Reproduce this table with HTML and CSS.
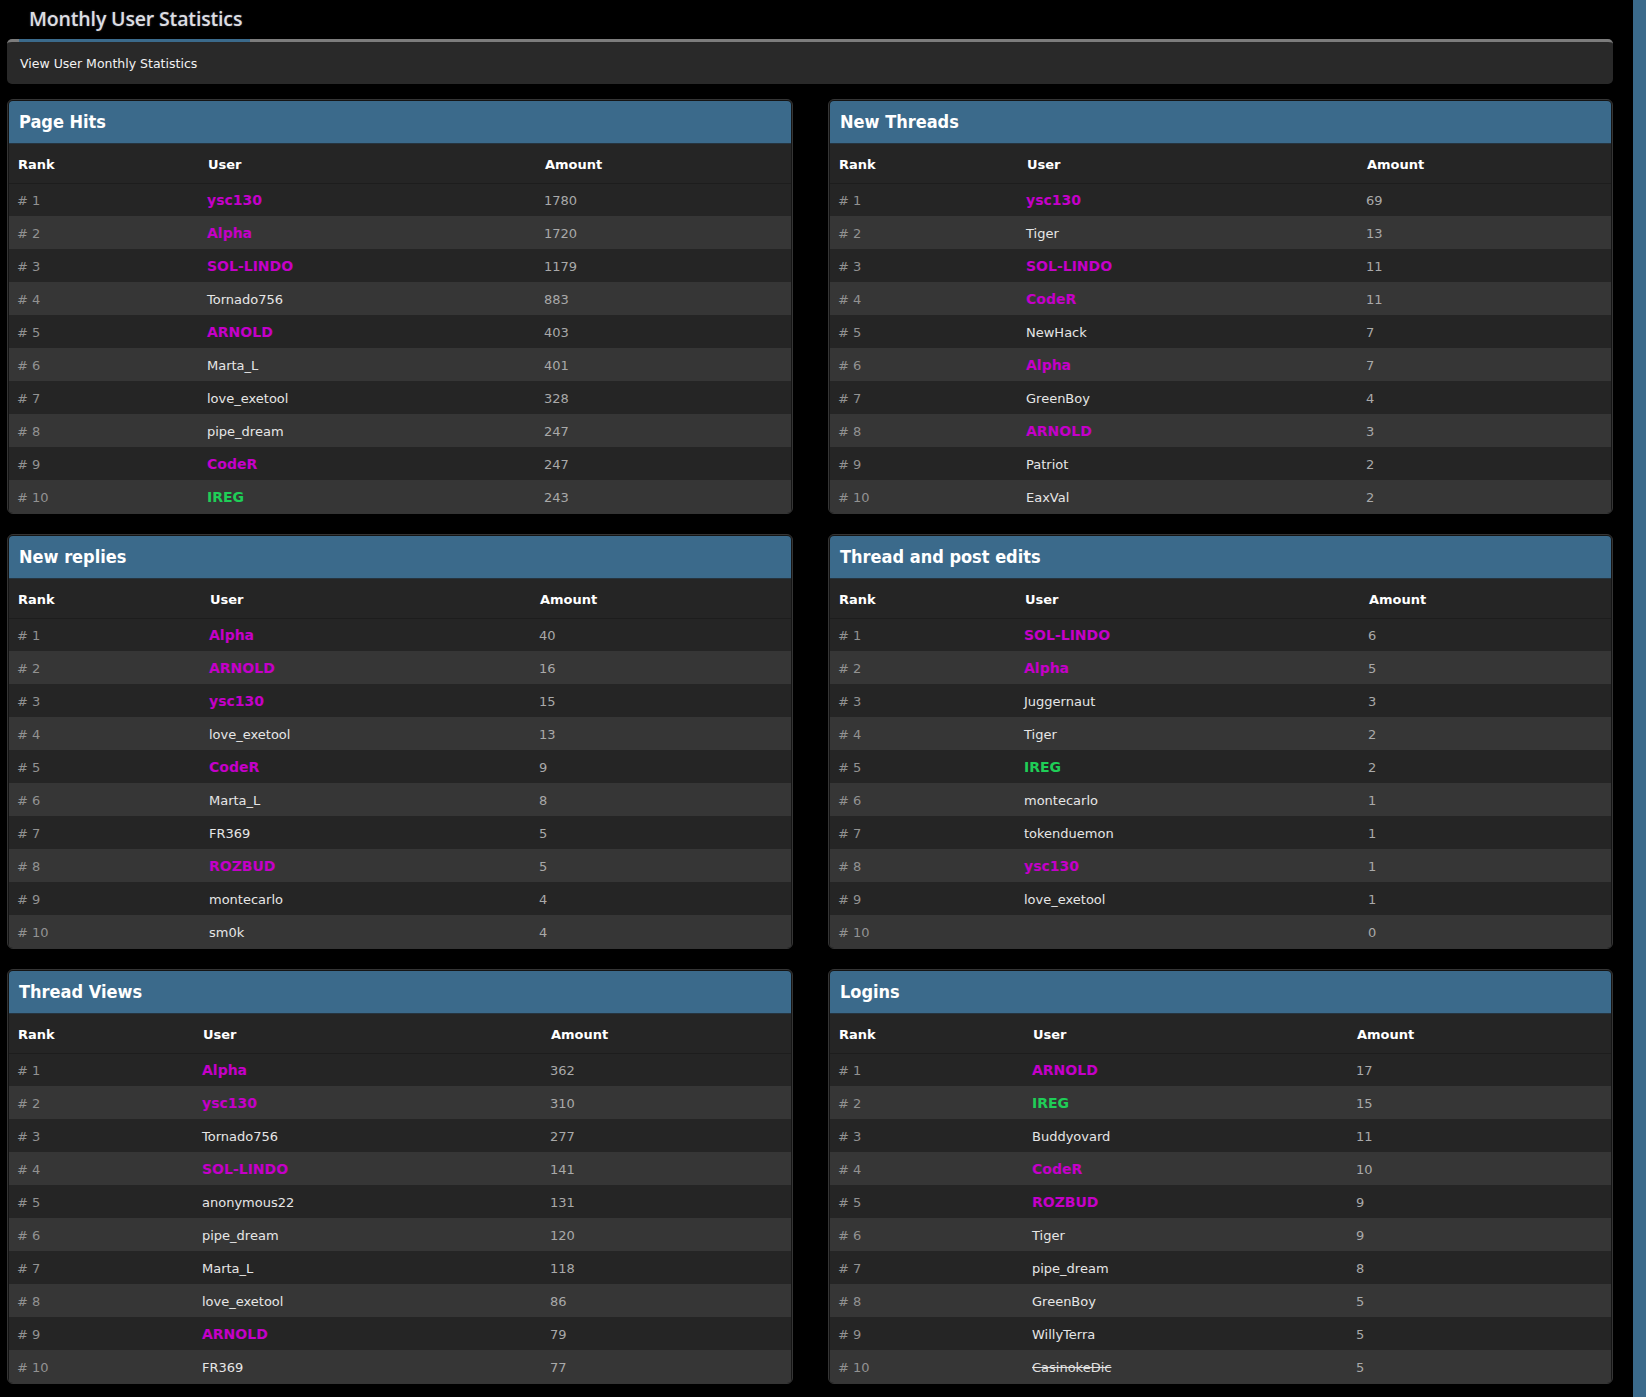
FILE: index.html
```html
<!DOCTYPE html>
<html lang="en">
<head>
<meta charset="utf-8">
<title>Monthly User Statistics</title>
<link rel="stylesheet" href="styles.css">
</head>
<body>
<div class="page">
  <main class="main">
    <h1 class="page-title">Monthly User Statistics</h1>
    <nav class="subnav"><span class="subnav-item">View User Monthly Statistics</span></nav>

    <div class="grid">
      <section class="panel">
        <h2 class="panel-head">Page Hits</h2>
        <table class="stats stats--hits">
          <colgroup><col class="c-rank"><col class="c-user"><col></colgroup>
          <thead><tr><th>Rank</th><th>User</th><th>Amount</th></tr></thead>
          <tbody>
            <tr><td class="rank"># 1</td><td><span class="u-mag">ysc130</span></td><td class="amt">1780</td></tr>
            <tr><td class="rank"># 2</td><td><span class="u-mag">Alpha</span></td><td class="amt">1720</td></tr>
            <tr><td class="rank"># 3</td><td><span class="u-mag">SOL-LINDO</span></td><td class="amt">1179</td></tr>
            <tr><td class="rank"># 4</td><td class="u">Tornado756</td><td class="amt">883</td></tr>
            <tr><td class="rank"># 5</td><td><span class="u-mag">ARNOLD</span></td><td class="amt">403</td></tr>
            <tr><td class="rank"># 6</td><td class="u">Marta_L</td><td class="amt">401</td></tr>
            <tr><td class="rank"># 7</td><td class="u">love_exetool</td><td class="amt">328</td></tr>
            <tr><td class="rank"># 8</td><td class="u">pipe_dream</td><td class="amt">247</td></tr>
            <tr><td class="rank"># 9</td><td><span class="u-mag">CodeR</span></td><td class="amt">247</td></tr>
            <tr><td class="rank"># 10</td><td><span class="u-grn">IREG</span></td><td class="amt">243</td></tr>
          </tbody>
        </table>
      </section>

      <section class="panel">
        <h2 class="panel-head">New Threads</h2>
        <table class="stats stats--threads">
          <colgroup><col class="c-rank"><col class="c-user"><col></colgroup>
          <thead><tr><th>Rank</th><th>User</th><th>Amount</th></tr></thead>
          <tbody>
            <tr><td class="rank"># 1</td><td><span class="u-mag">ysc130</span></td><td class="amt">69</td></tr>
            <tr><td class="rank"># 2</td><td class="u">Tiger</td><td class="amt">13</td></tr>
            <tr><td class="rank"># 3</td><td><span class="u-mag">SOL-LINDO</span></td><td class="amt">11</td></tr>
            <tr><td class="rank"># 4</td><td><span class="u-mag">CodeR</span></td><td class="amt">11</td></tr>
            <tr><td class="rank"># 5</td><td class="u">NewHack</td><td class="amt">7</td></tr>
            <tr><td class="rank"># 6</td><td><span class="u-mag">Alpha</span></td><td class="amt">7</td></tr>
            <tr><td class="rank"># 7</td><td class="u">GreenBoy</td><td class="amt">4</td></tr>
            <tr><td class="rank"># 8</td><td><span class="u-mag">ARNOLD</span></td><td class="amt">3</td></tr>
            <tr><td class="rank"># 9</td><td class="u">Patriot</td><td class="amt">2</td></tr>
            <tr><td class="rank"># 10</td><td class="u">EaxVal</td><td class="amt">2</td></tr>
          </tbody>
        </table>
      </section>

      <section class="panel">
        <h2 class="panel-head">New replies</h2>
        <table class="stats stats--replies">
          <colgroup><col class="c-rank"><col class="c-user"><col></colgroup>
          <thead><tr><th>Rank</th><th>User</th><th>Amount</th></tr></thead>
          <tbody>
            <tr><td class="rank"># 1</td><td><span class="u-mag">Alpha</span></td><td class="amt">40</td></tr>
            <tr><td class="rank"># 2</td><td><span class="u-mag">ARNOLD</span></td><td class="amt">16</td></tr>
            <tr><td class="rank"># 3</td><td><span class="u-mag">ysc130</span></td><td class="amt">15</td></tr>
            <tr><td class="rank"># 4</td><td class="u">love_exetool</td><td class="amt">13</td></tr>
            <tr><td class="rank"># 5</td><td><span class="u-mag">CodeR</span></td><td class="amt">9</td></tr>
            <tr><td class="rank"># 6</td><td class="u">Marta_L</td><td class="amt">8</td></tr>
            <tr><td class="rank"># 7</td><td class="u">FR369</td><td class="amt">5</td></tr>
            <tr><td class="rank"># 8</td><td><span class="u-mag">ROZBUD</span></td><td class="amt">5</td></tr>
            <tr><td class="rank"># 9</td><td class="u">montecarlo</td><td class="amt">4</td></tr>
            <tr><td class="rank"># 10</td><td class="u">sm0k</td><td class="amt">4</td></tr>
          </tbody>
        </table>
      </section>

      <section class="panel">
        <h2 class="panel-head">Thread and post edits</h2>
        <table class="stats stats--edits">
          <colgroup><col class="c-rank"><col class="c-user"><col></colgroup>
          <thead><tr><th>Rank</th><th>User</th><th>Amount</th></tr></thead>
          <tbody>
            <tr><td class="rank"># 1</td><td><span class="u-mag">SOL-LINDO</span></td><td class="amt">6</td></tr>
            <tr><td class="rank"># 2</td><td><span class="u-mag">Alpha</span></td><td class="amt">5</td></tr>
            <tr><td class="rank"># 3</td><td class="u">Juggernaut</td><td class="amt">3</td></tr>
            <tr><td class="rank"># 4</td><td class="u">Tiger</td><td class="amt">2</td></tr>
            <tr><td class="rank"># 5</td><td><span class="u-grn">IREG</span></td><td class="amt">2</td></tr>
            <tr><td class="rank"># 6</td><td class="u">montecarlo</td><td class="amt">1</td></tr>
            <tr><td class="rank"># 7</td><td class="u">tokenduemon</td><td class="amt">1</td></tr>
            <tr><td class="rank"># 8</td><td><span class="u-mag">ysc130</span></td><td class="amt">1</td></tr>
            <tr><td class="rank"># 9</td><td class="u">love_exetool</td><td class="amt">1</td></tr>
            <tr><td class="rank"># 10</td><td class="u"></td><td class="amt">0</td></tr>
          </tbody>
        </table>
      </section>

      <section class="panel">
        <h2 class="panel-head">Thread Views</h2>
        <table class="stats stats--views">
          <colgroup><col class="c-rank"><col class="c-user"><col></colgroup>
          <thead><tr><th>Rank</th><th>User</th><th>Amount</th></tr></thead>
          <tbody>
            <tr><td class="rank"># 1</td><td><span class="u-mag">Alpha</span></td><td class="amt">362</td></tr>
            <tr><td class="rank"># 2</td><td><span class="u-mag">ysc130</span></td><td class="amt">310</td></tr>
            <tr><td class="rank"># 3</td><td class="u">Tornado756</td><td class="amt">277</td></tr>
            <tr><td class="rank"># 4</td><td><span class="u-mag">SOL-LINDO</span></td><td class="amt">141</td></tr>
            <tr><td class="rank"># 5</td><td class="u">anonymous22</td><td class="amt">131</td></tr>
            <tr><td class="rank"># 6</td><td class="u">pipe_dream</td><td class="amt">120</td></tr>
            <tr><td class="rank"># 7</td><td class="u">Marta_L</td><td class="amt">118</td></tr>
            <tr><td class="rank"># 8</td><td class="u">love_exetool</td><td class="amt">86</td></tr>
            <tr><td class="rank"># 9</td><td><span class="u-mag">ARNOLD</span></td><td class="amt">79</td></tr>
            <tr><td class="rank"># 10</td><td class="u">FR369</td><td class="amt">77</td></tr>
          </tbody>
        </table>
      </section>

      <section class="panel">
        <h2 class="panel-head">Logins</h2>
        <table class="stats stats--logins">
          <colgroup><col class="c-rank"><col class="c-user"><col></colgroup>
          <thead><tr><th>Rank</th><th>User</th><th>Amount</th></tr></thead>
          <tbody>
            <tr><td class="rank"># 1</td><td><span class="u-mag">ARNOLD</span></td><td class="amt">17</td></tr>
            <tr><td class="rank"># 2</td><td><span class="u-grn">IREG</span></td><td class="amt">15</td></tr>
            <tr><td class="rank"># 3</td><td class="u">Buddyovard</td><td class="amt">11</td></tr>
            <tr><td class="rank"># 4</td><td><span class="u-mag">CodeR</span></td><td class="amt">10</td></tr>
            <tr><td class="rank"># 5</td><td><span class="u-mag">ROZBUD</span></td><td class="amt">9</td></tr>
            <tr><td class="rank"># 6</td><td class="u">Tiger</td><td class="amt">9</td></tr>
            <tr><td class="rank"># 7</td><td class="u">pipe_dream</td><td class="amt">8</td></tr>
            <tr><td class="rank"># 8</td><td class="u">GreenBoy</td><td class="amt">5</td></tr>
            <tr><td class="rank"># 9</td><td class="u">WillyTerra</td><td class="amt">5</td></tr>
            <tr><td class="rank"># 10</td><td class="u"><s class="banned">CasinokeDic</s></td><td class="amt">5</td></tr>
          </tbody>
        </table>
      </section>
    </div>
  </main>
  <div class="side-strip"></div>
</div>
</body>
</html>
```

FILE: styles.css
```css
html, body {
  margin: 0;
  padding: 0;
  background: #000;
}

body {
  font-family: "DejaVu Sans", Verdana, sans-serif;
  font-size: 13px;
  color: #e4e4e4;
}

.page {
  display: flex;
  min-height: 1397px;
}

.main {
  width: 1606px;
  padding-left: 7px;
  flex: none;
}

.side-strip {
  margin-left: auto;
  width: 13px;
  background: #3b6a8b;
}

.page-title {
  margin: 0;
  height: 39px;
  box-sizing: border-box;
  padding: 5px 0 0 22px;
  font-family: "Open Sans", "Noto Sans", sans-serif;
  font-weight: 600;
  font-size: 19.5px;
  line-height: 28px;
  color: #dcdde3;
  text-shadow: 0 0 2px rgba(255, 255, 255, 0.3);
  letter-spacing: -0.15px;
}

.subnav {
  position: relative;
  height: 45px;
  box-sizing: border-box;
  border-top: 3px solid #7c7c7c;
  border-radius: 5px;
  background: #292929;
  display: flex;
  align-items: center;
  padding: 0 0 0 13px;
}

.subnav::before {
  content: "";
  position: absolute;
  top: -3px;
  left: 12px;
  width: 231px;
  height: 3px;
  background: #3b6a8b;
}

.subnav-item {
  font-size: 12.5px;
  color: #f2f2f2;
  line-height: 16px;
  padding-top: 1px;
}

.grid {
  display: grid;
  grid-template-columns: 786px 785px;
  column-gap: 35px;
  row-gap: 20px;
  margin-top: 15px;
}

.panel {
  border: 1px solid #353535;
  border-radius: 6px;
  padding: 1px 1px 0;
  background: #151515;
  overflow: hidden;
}

.panel-head {
  margin: 0;
  height: 43px;
  box-sizing: border-box;
  background: #3b6a8b;
  border-radius: 4px 4px 0 0;
  border-bottom: 1px solid #26343f;
  padding: 0 0 0 10px;
  font-family: "DejaVu Sans Condensed", "DejaVu Sans", sans-serif;
  font-stretch: condensed;
  font-size: 18px;
  font-weight: 700;
  line-height: 42px;
  color: #fff;
}

.stats {
  width: 100%;
  border-collapse: collapse;
  table-layout: fixed;
}

.stats th {
  height: 39px;
  box-sizing: border-box;
  padding: 3px 0 0 9px;
  text-align: left;
  font-weight: 700;
  font-size: 13px;
  color: #fff;
  background: #252525;
  border-bottom: 1px solid #1d1d1d;
}

.stats td {
  height: 33px;
  padding: 2px 0 0 8px;
  box-sizing: border-box;
  background: #252525;
  line-height: 16px;
  white-space: nowrap;
}

.stats tbody tr:nth-child(even) td {
  background: #363636;
}

.rank {
  color: #929292;
}

.amt {
  color: #a9a9a9;
}

.u {
  color: #e6e6e6;
}

.u-mag {
  color: #c400c8;
  font-weight: 700;
  font-size: 14px;
}

.u-grn {
  color: #1fce57;
  font-weight: 700;
  font-size: 14px;
}

.banned {
  color: #e0e0e0;
}

.stats--hits .c-rank { width: 190px; }
.stats--hits .c-user { width: 337px; }

.stats--threads .c-rank { width: 188px; }
.stats--threads .c-user { width: 340px; }

.stats--replies .c-rank { width: 192px; }
.stats--replies .c-user { width: 330px; }

.stats--edits .c-rank { width: 186px; }
.stats--edits .c-user { width: 344px; }

.stats--views .c-rank { width: 185px; }
.stats--views .c-user { width: 348px; }

.stats--logins .c-rank { width: 194px; }
.stats--logins .c-user { width: 324px; }
```
